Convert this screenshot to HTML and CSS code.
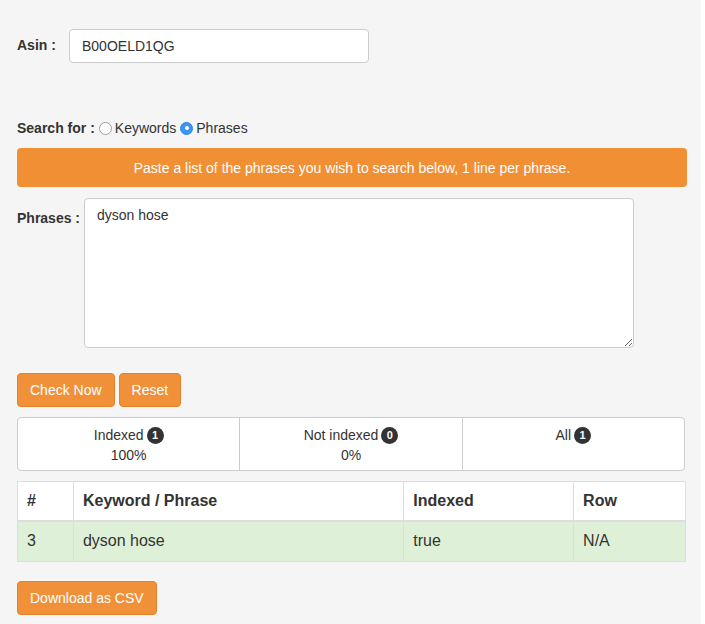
FILE: index.html
```html
<!DOCTYPE html>
<html>
<head>
<meta charset="utf-8">
<link rel="stylesheet" href="styles.css">
</head>
<body>
<div class="page">
  <div class="row asin-row">
    <label class="lbl lbl-asin">Asin :</label>
    <input class="field asin-input" type="text" value="B00OELD1QG">
  </div>

  <div class="search-row">
    <span class="lbl">Search for :</span>
    <span class="radio"></span><span class="opt">Keywords</span>
    <span class="radio checked"></span><span class="opt">Phrases</span>
  </div>

  <div class="alert">Paste a list of the phrases you wish to search below, 1 line per phrase.</div>

  <div class="row phrases-row">
    <label class="lbl lbl-phrases">Phrases :</label>
    <textarea class="field phrases">dyson hose</textarea>
  </div>

  <div class="actions">
    <button class="btn">Check Now</button>
    <button class="btn">Reset</button>
  </div>

  <div class="stats">
    <div class="stat">
      <div class="stat-head">Indexed <span class="badge">1</span></div>
      <div>100%</div>
    </div>
    <div class="stat">
      <div class="stat-head">Not indexed <span class="badge">0</span></div>
      <div>0%</div>
    </div>
    <div class="stat">
      <div class="stat-head">All <span class="badge">1</span></div>
    </div>
  </div>

  <table class="results">
    <thead>
      <tr>
        <th class="c-num">#</th>
        <th class="c-kw">Keyword / Phrase</th>
        <th class="c-idx">Indexed</th>
        <th class="c-row">Row</th>
      </tr>
    </thead>
    <tbody>
      <tr class="success">
        <td>3</td>
        <td>dyson hose</td>
        <td>true</td>
        <td>N/A</td>
      </tr>
    </tbody>
  </table>

  <div class="download">
    <button class="btn">Download as CSV</button>
  </div>
</div>
</body>
</html>
```

FILE: styles.css
```css
* { box-sizing: border-box; }
html, body {
  margin: 0;
  padding: 0;
  background: #ffffff;
}
body {
  font-family: "Liberation Sans", Arial, sans-serif;
  font-size: 14px;
  line-height: 20px;
  color: #333333;
}
.page {
  width: 701px;
  min-height: 624px;
  background: #f5f5f5;
  padding: 29px 16px 10px 17px;
}
.row {
  display: flex;
  align-items: flex-start;
}
.lbl {
  font-weight: bold;
}
.lbl-asin {
  width: 52px;
  padding-top: 6px;
}
.field {
  font-family: "Liberation Sans", Arial, sans-serif;
  font-size: 14px;
  line-height: 20px;
  color: #333;
  background: #fff;
  border: 1px solid #cccccc;
  border-radius: 4px;
  padding: 6px 12px;
  outline: none;
}
.asin-input {
  width: 300px;
  height: 34px;
}
.search-row {
  margin-top: 55px;
  display: flex;
  align-items: center;
  height: 20px;
}
.radio {
  display: inline-block;
  width: 13px;
  height: 13px;
  border-radius: 50%;
  border: 1px solid #a0a0a0;
  background: #fff;
  margin: 0 3px 0 4px;
  position: relative;
}
.radio.checked {
  background: #3a95f5;
  border-color: #2f86e6;
}
.radio.checked::after {
  content: "";
  position: absolute;
  left: 3.5px;
  top: 3.5px;
  width: 4px;
  height: 4px;
  border-radius: 50%;
  background: #fff;
}
.opt + .radio {
  margin-left: 4px;
}
.alert {
  margin-top: 10px;
  width: 670px;
  height: 39px;
  background: #f18f35;
  color: #fff;
  border-radius: 4px;
  text-align: center;
  padding: 10px 0 9px;
  font-size: 14px;
}
.phrases-row {
  margin-top: 11px;
}
.lbl-phrases {
  width: 67px;
  padding-top: 10px;
}
.phrases {
  width: 550px;
  height: 150px;
  resize: vertical;
  display: block;
}
.actions {
  margin-top: 25px;
  display: flex;
  gap: 4px;
}
.btn {
  font-family: "Liberation Sans", Arial, sans-serif;
  font-size: 14px;
  line-height: 20px;
  color: #fff;
  background: #f0913a;
  border: 1px solid #e3822b;
  border-radius: 4px;
  padding: 6px 12px;
  height: 34px;
}
.stats {
  margin-top: 10px;
  width: 668px;
  display: flex;
  background: #fff;
  border: 1px solid #cccccc;
  border-radius: 4px;
}
.stat {
  flex: 1;
  text-align: center;
  padding: 7px 0 5px;
  height: 52px;
}
.stat + .stat {
  border-left: 1px solid #cccccc;
}
.stat-head {
  display: flex;
  justify-content: center;
  align-items: center;
  gap: 3px;
}
.badge {
  display: inline-block;
  width: 17px;
  height: 17px;
  border-radius: 50%;
  background: #333333;
  color: #fff;
  font-size: 11px;
  font-weight: bold;
  line-height: 17px;
  text-align: center;
}
.results {
  margin-top: 10px;
  width: 669px;
  border-collapse: collapse;
  background: #fff;
  font-size: 16px;
  line-height: 22px;
}
.results th,
.results td {
  border: 1px solid #dddddd;
  text-align: left;
  padding: 8px 9px;
}
.results th {
  font-weight: bold;
  border-bottom-width: 2px;
  height: 39px;
}
.results td {
  height: 40px;
}
.results tr.success td {
  background: #dff0d8;
}
.c-num { width: 56px; }
.c-kw { width: 331px; }
.c-idx { width: 170px; }
.c-row { width: 112px; }
.download {
  margin-top: 19px;
}
```
